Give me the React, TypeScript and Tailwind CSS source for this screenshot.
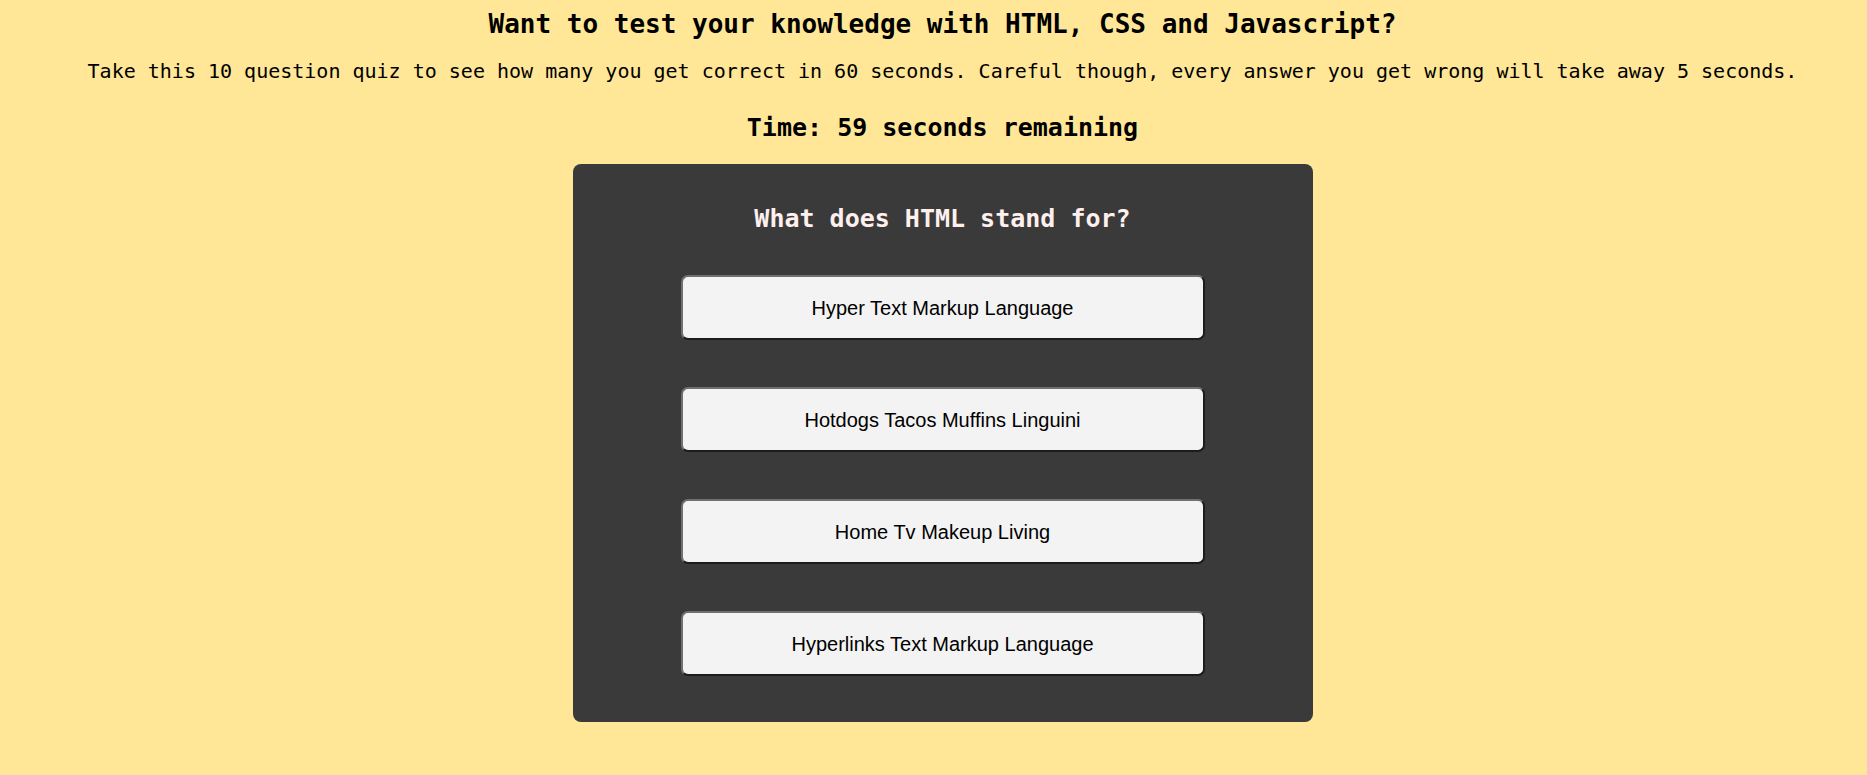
import { useEffect, useState } from "react";

const questions = [
  {
    title: "What does HTML stand for?",
    choices: [
      "Hyper Text Markup Language",
      "Hotdogs Tacos Muffins Linguini",
      "Home Tv Makeup Living",
      "Hyperlinks Text Markup Language",
    ],
  },
];

function App() {
  const [time] = useState(59);
  const [current] = useState(0);

  useEffect(() => {
    document.body.style.backgroundColor = "#ffe797";
  }, []);

  const q = questions[current];

  return (
    <div className="min-h-screen bg-[#ffe797] pl-[18px] text-black font-['DejaVu_Sans_Mono',monospace]">
      <div className="flex flex-col items-center text-center">
        <h1 className="mt-[9px] text-[26px] leading-[30px] font-bold">
          Want to test your knowledge with HTML, CSS and Javascript?
        </h1>
        <p className="mt-5 text-[20px] leading-6">
          Take this 10 question quiz to see how many you get correct in 60 seconds. Careful though, every
          answer you get wrong will take away 5 seconds.
        </p>
        <h2 className="mt-[30px] text-[25px] leading-[30px] font-bold">
          Time: {time} seconds remaining
        </h2>

        <div className="mt-[21px] w-[740px] rounded-lg bg-[#3a3a3a] pt-[40px] pb-[46px] flex flex-col items-center">
          <h2 className="text-[25px] leading-[30px] font-bold text-[#fff0ee]">{q.title}</h2>
          <div className="mt-[41px] flex flex-col gap-[47px]">
            {q.choices.map((choice, index) => {
              return (
                <button
                  key={index}
                  className="h-[65px] w-[524px] rounded-[7px] border-2 border-t-[#707070] border-l-[#707070] border-b-[#1c1c1c] border-r-[#1c1c1c] bg-[#f3f3f3] text-[20px] text-black font-['Liberation_Sans',Arial,sans-serif]"
                >
                  {choice}
                </button>
              );
            })}
          </div>
        </div>
      </div>
    </div>
  );
}

export default App;
